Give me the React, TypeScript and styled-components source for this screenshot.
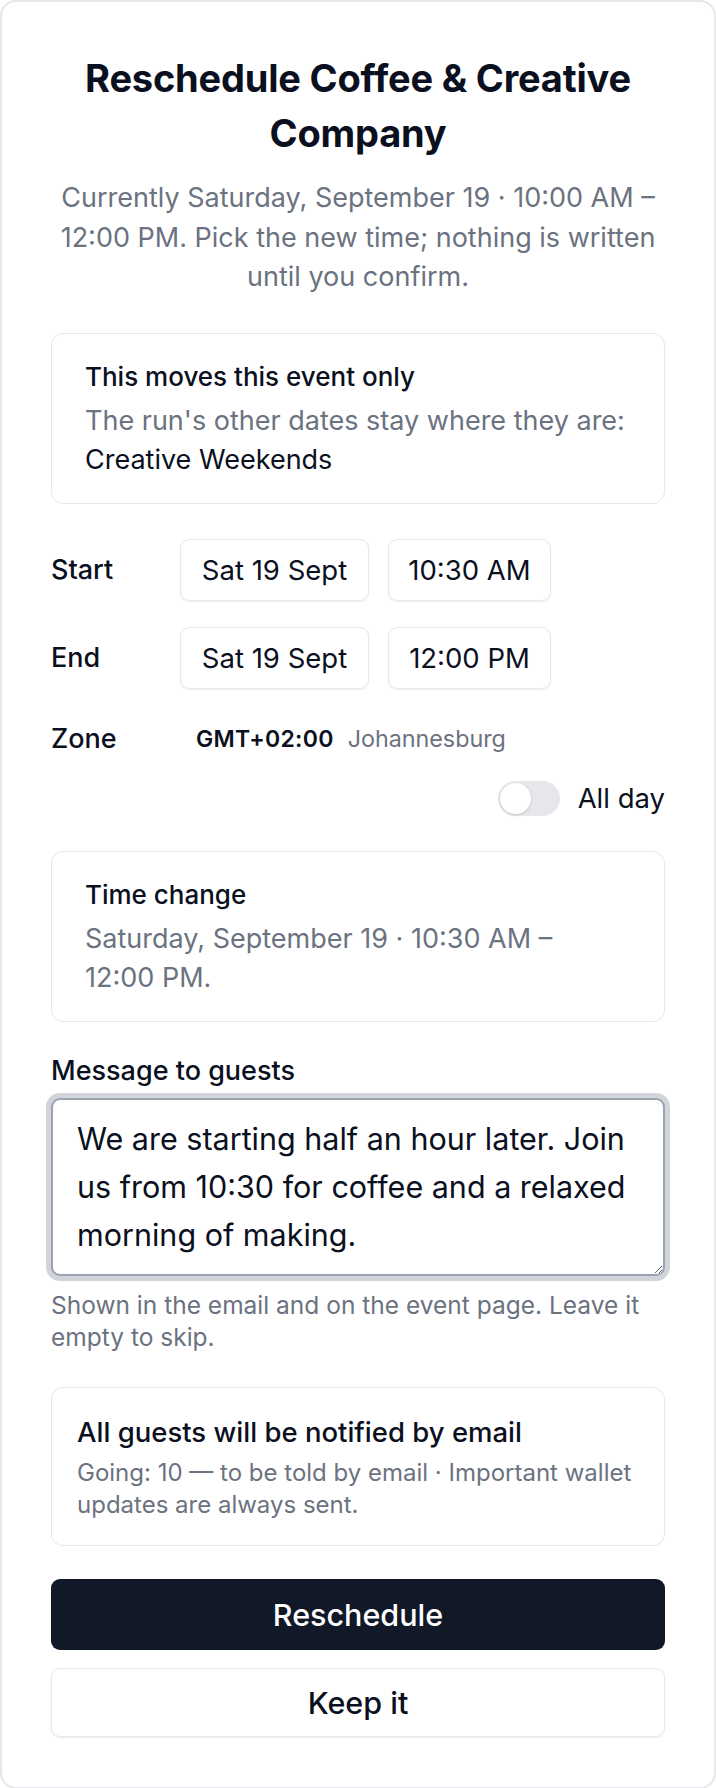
import React, { useState } from 'react';
import styled, { createGlobalStyle } from 'styled-components';

const GlobalStyle = createGlobalStyle`
  * { box-sizing: border-box; }
  html, body {
    margin: 0;
    padding: 0;
    background: #ffffff;
  }
  body {
    font-family: Inter, "Noto Sans", "Liberation Sans", sans-serif;
    color: #0b1020;
    -webkit-font-smoothing: antialiased;
  }
`;

const Card = styled.div`
  min-height: 100vh;
  border: 2px solid #e5e7eb;
  border-radius: 16px;
  padding: 49px 49px 50px;
  display: flex;
  flex-direction: column;
`;

const Header = styled.header`
  text-align: center;
  margin-bottom: 36px;
`;

const Title = styled.h1`
  margin: 0 0 17px;
  font-size: 38px;
  line-height: 55px;
  font-weight: 700;
  letter-spacing: -0.2px;
  color: #0b1020;
`;

const Subtitle = styled.p`
  margin: 0;
  font-size: 27px;
  line-height: 39.5px;
  color: #6b7280;
`;

const InfoBox = styled.section<{ $compact?: boolean }>`
  border: 1.5px solid #e5e7eb;
  border-radius: 12px;
  padding: ${p => (p.$compact ? '25px 25px 25px' : '24px 33px 23px')};
  margin-bottom: ${p => (p.$compact ? '33px' : '35px')};
`;

const BoxTitle = styled.div<{ $compact?: boolean }>`
  font-size: ${p => (p.$compact ? '27.5px' : '26px')};
  line-height: 38px;
  font-weight: 500;
  color: #0b1020;
  margin-bottom: ${p => (p.$compact ? '6.5px' : '5px')};
`;

const BoxText = styled.div<{ $small?: boolean }>`
  font-size: ${p => (p.$small ? '24px' : '27px')};
  line-height: ${p => (p.$small ? '31.5px' : '39.5px')};
  color: #6b7280;
`;

const Strong = styled.span`
  color: #0b1020;
`;

const Rows = styled.div`
  display: flex;
  flex-direction: column;
  gap: 26px;
`;

const Row = styled.div<{ $height: number }>`
  display: grid;
  grid-template-columns: 129px 1fr;
  align-items: center;
  min-height: ${p => p.$height}px;
`;

const Label = styled.div`
  font-size: 27px;
  line-height: 40px;
  font-weight: 500;
  color: #0b1020;
`;

const Fields = styled.div`
  display: flex;
  gap: 19px;
`;

const FieldButton = styled.button<{ $width: number }>`
  height: 62px;
  width: ${p => p.$width}px;
  padding: 0;
  border: 1.5px solid #e5e7eb;
  border-radius: 9px;
  background: #ffffff;
  box-shadow: 0 1px 2px rgba(16, 24, 40, 0.07);
  font-family: inherit;
  font-size: 27.5px;
  color: #0b1020;
  white-space: nowrap;
  cursor: pointer;
`;

const ZoneValue = styled.div`
  padding-left: 16px;
  display: flex;
  align-items: baseline;
  gap: 14px;
`;

const Offset = styled.span`
  font-size: 23px;
  font-weight: 600;
  letter-spacing: 0.3px;
  color: #0b1020;
`;

const City = styled.span`
  font-size: 23.3px;
  color: #6b7280;
`;

const ToggleRow = styled.label`
  display: flex;
  justify-content: flex-end;
  align-items: center;
  gap: 18px;
  height: 35px;
  margin: 18px 0 35px;
  font-size: 27.5px;
  color: #0b1020;
  cursor: pointer;
`;

const Track = styled.span<{ $on: boolean }>`
  position: relative;
  width: 62px;
  height: 35px;
  border-radius: 18px;
  background: ${p => (p.$on ? '#111827' : '#e5e7eb')};
  transition: background 0.2s;
`;

const Thumb = styled.span<{ $on: boolean }>`
  position: absolute;
  top: 2px;
  left: ${p => (p.$on ? '29px' : '2px')};
  width: 31px;
  height: 31px;
  border-radius: 50%;
  background: #ffffff;
  box-shadow: 0 1px 3px rgba(0, 0, 0, 0.15);
  transition: left 0.2s;
`;

const MessageGroup = styled.div`
  margin-bottom: 34px;
`;

const MessageLabel = styled.label`
  display: block;
  font-size: 27px;
  line-height: 36px;
  font-weight: 500;
  color: #0b1020;
  margin: -4px 0 9px;
`;

const TextArea = styled.textarea`
  display: block;
  width: 100%;
  height: 178px;
  padding: 15px 24px;
  border: 2px solid #9ca3af;
  border-radius: 9px;
  box-shadow: 0 0 0 5px #d1d5db;
  outline: none;
  font-family: inherit;
  font-size: 30.5px;
  line-height: 48px;
  color: #0b1020;
  resize: vertical;
`;

const Help = styled.p`
  margin: 13px 0 0;
  font-size: 24.5px;
  line-height: 32px;
  color: #6b7280;
`;

const Actions = styled.div`
  display: flex;
  flex-direction: column;
  gap: 18px;
`;

const Button = styled.button<{ $primary?: boolean }>`
  height: ${p => (p.$primary ? '71px' : '69px')};
  border-radius: 9px;
  border: ${p => (p.$primary ? 'none' : '1.5px solid #e5e7eb')};
  background: ${p => (p.$primary ? '#111827' : '#ffffff')};
  color: ${p => (p.$primary ? '#ffffff' : '#0b1020')};
  box-shadow: ${p => (p.$primary ? 'none' : '0 1px 2px rgba(16, 24, 40, 0.07)')};
  font-family: inherit;
  font-size: 30.5px;
  font-weight: 500;
  cursor: pointer;
`;

// times keep "AM"/"PM" glued to the number, like Intl output does
const current = 'Currently Saturday, September 19 · 10:00\u00a0AM – 12:00\u00a0PM. Pick the new time; nothing is written until you confirm.';
const changed = 'Saturday, September 19 · 10:30\u00a0AM – 12:00\u00a0PM.';

export default function App() {
  const [allDay, setAllDay] = useState(false);
  const [message, setMessage] = useState(
    'We are starting half an hour later. Join us from 10:30 for coffee and a relaxed morning of making.'
  );

  return (
    <>
      <GlobalStyle />
      <Card>
        <Header>
          <Title>Reschedule Coffee &amp; Creative Company</Title>
          <Subtitle>{current}</Subtitle>
        </Header>

        <InfoBox>
          <BoxTitle>This moves this event only</BoxTitle>
          <BoxText>
            The run's other dates stay where they are: <Strong>Creative Weekends</Strong>
          </BoxText>
        </InfoBox>

        <Rows>
          <Row $height={62}>
            <Label>Start</Label>
            <Fields>
              <FieldButton $width={189}>Sat 19 Sept</FieldButton>
              <FieldButton $width={163}>10:30 AM</FieldButton>
            </Fields>
          </Row>
          <Row $height={62}>
            <Label>End</Label>
            <Fields>
              <FieldButton $width={189}>Sat 19 Sept</FieldButton>
              <FieldButton $width={163}>12:00 PM</FieldButton>
            </Fields>
          </Row>
          <Row $height={48}>
            <Label>Zone</Label>
            <ZoneValue>
              <Offset>GMT+02:00</Offset>
              <City>Johannesburg</City>
            </ZoneValue>
          </Row>
        </Rows>
        <ToggleRow onClick={() => setAllDay(v => !v)}>
          <Track $on={allDay}>
            <Thumb $on={allDay} />
          </Track>
          All day
        </ToggleRow>

        <InfoBox>
          <BoxTitle>Time change</BoxTitle>
          <BoxText>{changed}</BoxText>
        </InfoBox>

        <MessageGroup>
          <MessageLabel htmlFor="msg">Message to guests</MessageLabel>
          <TextArea id="msg" value={message} onChange={e => setMessage(e.target.value)} />
          <Help>Shown in the email and on the event page. Leave it empty to skip.</Help>
        </MessageGroup>

        <InfoBox $compact>
          <BoxTitle $compact>All guests will be notified by email</BoxTitle>
          <BoxText $small>Going: 10 — to be told by email · Important wallet updates are always sent.</BoxText>
        </InfoBox>

        <Actions>
          <Button $primary>Reschedule</Button>
          <Button>Keep it</Button>
        </Actions>
      </Card>
    </>
  );
}
